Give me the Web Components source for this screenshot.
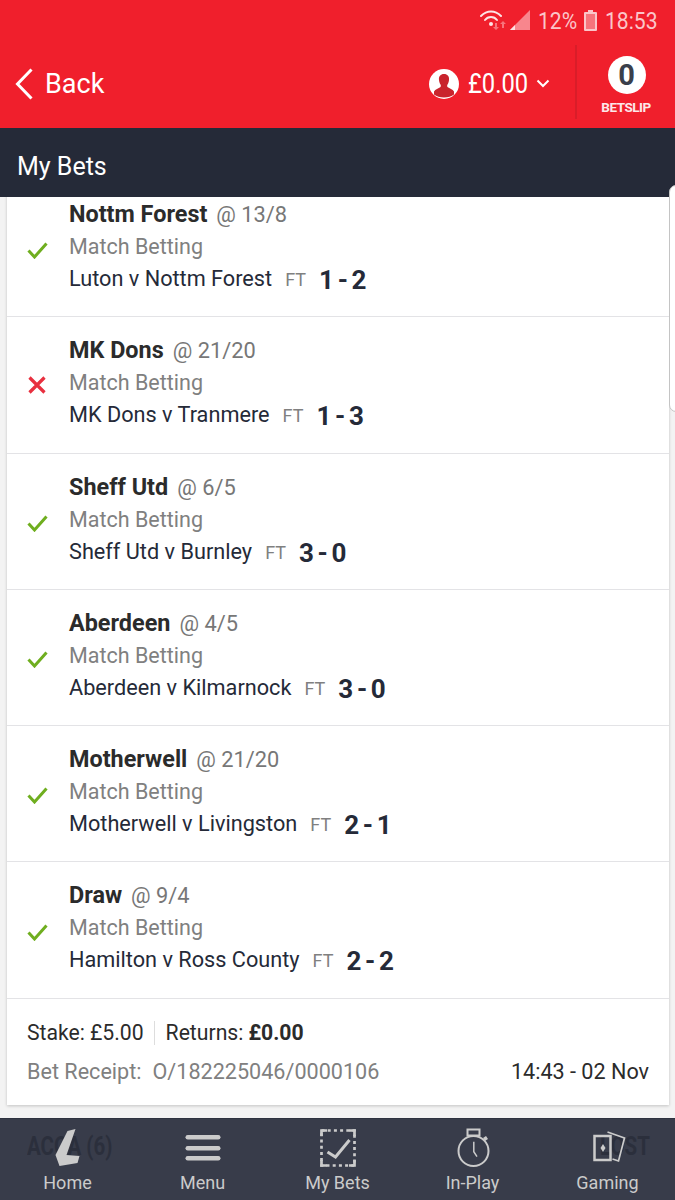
<!DOCTYPE html>
<html>
<head>
<meta charset="utf-8">
<title>My Bets</title>
<style>
  html,body{ margin:0; padding:0; width:675px; height:1200px; overflow:hidden; background:#f3f3f3; font-family:Roboto,sans-serif; }
</style>
</head>
<body>
<bet-app>
  <app-header slot="top"></app-header>
  <bet-row name="Nottm Forest" price="13/8" match="Luton v Nottm Forest" score="1 - 2" result="won"></bet-row>
  <bet-row name="MK Dons" price="21/20" match="MK Dons v Tranmere" score="1 - 3" result="lost"></bet-row>
  <bet-row name="Sheff Utd" price="6/5" match="Sheff Utd v Burnley" score="3 - 0" result="won"></bet-row>
  <bet-row name="Aberdeen" price="4/5" match="Aberdeen v Kilmarnock" score="3 - 0" result="won"></bet-row>
  <bet-row name="Motherwell" price="21/20" match="Motherwell v Livingston" score="2 - 1" result="won"></bet-row>
  <bet-row name="Draw" price="9/4" match="Hamilton v Ross County" score="2 - 2" result="won"></bet-row>
  <bet-receipt></bet-receipt>
  <bottom-nav slot="bottom"></bottom-nav>
</bet-app>
<script>
class BetApp extends HTMLElement{
  constructor(){
    super();
    this.attachShadow({mode:'open'});
    this.shadowRoot.innerHTML = `
      <style>
        :host{ display:flex; flex-direction:column; height:1200px; position:relative; overflow:hidden }
        .scroll{ flex:1; min-height:0; overflow:hidden }
        .card{ margin:-16px 6px 0 7px; background:#fff; box-shadow:0 1px 3px rgba(0,0,0,.2) }
        /* side panel handle sits over the title bar too */
        .handle{ position:absolute; right:-8px; top:185px; width:14px; height:227px; box-sizing:border-box; background:#fff; border:1px solid #c4c4c4; border-radius:7px }
      </style>
      <slot name="top"></slot>
      <div class="scroll">
        <div class="card"><slot></slot></div>
      </div>
      <div class="handle"></div>
      <slot name="bottom"></slot>`;
  }
}
customElements.define('bet-app', BetApp);

class AppHeader extends HTMLElement{
  constructor(){
    super();
    this.attachShadow({mode:'open'});
    this.shadowRoot.innerHTML = `
      <style>
        :host{ display:block; color:#fff }
        .red{ background:#f01f2c; height:128px; display:flex; flex-direction:column }
        .status{ height:40px; display:flex; justify-content:flex-end; align-items:center; padding:1px 18px 0 0; color:#fbc5c9; font-size:24px; box-sizing:border-box }
        .nar{ display:inline-block; transform:scaleX(.88); transform-origin:left center; white-space:nowrap }
        .pct{ width:39px; margin:0 7px 0 8px }
        .clock{ width:52px; margin-left:8px }
        .main{ flex:1; display:flex; align-items:center; padding-left:15px }
        .back{ display:flex; align-items:center; gap:12px; font-size:27px; margin-bottom:1px }
        .spacer{ flex:1 }
        .balance{ display:flex; align-items:center; font-size:27px; margin-bottom:1px }
        .amt{ width:60px; margin:0 8px 0 9px; transform:scaleX(.88) }
        .sep{ width:2px; height:74px; background:#d91d29; margin:0 0 5px 25px }
        .slip{ width:98px; display:flex; flex-direction:column; align-items:center; padding-top:2px; box-sizing:border-box }
        .badge{ width:38px; height:38px; margin-left:1px; border-radius:50%; background:#fff; color:#3a3f4b; font-weight:700; font-size:29px; display:flex; align-items:center; justify-content:center }
        .slip span{ font-size:13.500px; font-weight:700; margin-top:5px; letter-spacing:-.5px; color:#fde8e9 }
        .title{ background:#252a38; height:69px; display:flex; align-items:center; padding:7px 0 0 17px; box-sizing:border-box; font-size:25px }
        svg{ display:block }
      </style>
      <div class="red">
        <div class="status">
          <svg width="50" height="21" viewBox="0 0 50 21">
            <g fill="none" stroke="#fde4e6" stroke-width="2" stroke-linecap="round">
              <path d="M1 6 C7 0 15 0 21 6"/><path d="M5 10 C8 6 14 6 17 10"/>
            </g>
            <circle cx="11" cy="14" r="2" fill="#fde4e6"/>
            <path d="M16 20 l3 -3 h-2 v-4 h-2 v4 h-2z M23 11 l3 3 h-2 v4 h-2 v-4 h-2z" fill="#f7737b"/>
            <path d="M30 20 L50 0 V20Z" fill="#f8868d"/><path d="M30 20 L35 15 V20Z" fill="#fde0e2"/>
          </svg>
          <span class="nar pct">12%</span>
          <svg width="13" height="21" viewBox="0 0 13 21"><path d="M4 0h5v2h3a1 1 0 0 1 1 1v17a1 1 0 0 1-1 1h-11a1 1 0 0 1-1-1v-17a1 1 0 0 1 1-1h3z" fill="#fbc5c9"/><rect x="2" y="4" width="9" height="15" fill="#f6747c"/></svg>
          <span class="nar clock">18:53</span>
        </div>
        <div class="main">
          <div class="back">
            <svg width="18" height="32" viewBox="0 0 18 32"><path d="M16.500 1.500 L2.500 16 L16.500 30.500" fill="none" stroke="#fff" stroke-width="3"/></svg>
            <span>Back</span>
          </div>
          <div class="spacer"></div>
          <div class="balance">
            <svg width="30" height="30" viewBox="0 0 30 30"><circle cx="15" cy="15" r="15" fill="#fff"/><path d="M15 5c-3.500 0-5.500 2.500-5 6 .2 1.500.5 3 1.500 4.500.5 1 .5 2-.3 2.800-1.500 1.300-5 1.700-6.200 4.200v3C7.500 27.500 11 28.500 15 28.500s7.500-1 10-3v-3c-1.200-2.500-4.700-2.900-6.200-4.200-.8-.8-.8-1.800-.3-2.800 1-1.500 1.300-3 1.500-4.500.5-3.500-1.500-6-5-6z" fill="#c9242d"/></svg>
            <span class="nar amt">£0.00</span>
            <svg width="14" height="9" viewBox="0 0 14 9"><path d="M1.500 1.500 L7 7 L12.500 1.500" fill="none" stroke="#fff" stroke-width="2"/></svg>
          </div>
          <div class="sep"></div>
          <div class="slip">
            <div class="badge">0</div>
            <span>BETSLIP</span>
          </div>
        </div>
      </div>
      <div class="title">My Bets</div>`;
  }
}
customElements.define('app-header', AppHeader);

class BetRow extends HTMLElement{
  connectedCallback(){
    if(this.shadowRoot) return;
    this.attachShadow({mode:'open'});
    const a = n => this.getAttribute(n) || '';
    const icon = a('result') === 'lost'
      ? `<svg width="18" height="18" viewBox="0 0 18 18"><path d="M1.500 1.500 L16.500 16.500 M16.500 1.500 L1.500 16.500" stroke="#e8303f" stroke-width="3.200" fill="none"/></svg>`
      : `<svg style="margin-top:4px" width="21" height="17" viewBox="0 0 21 17"><path d="M1.500 8.500 L7.500 15 L19.500 1.500" stroke="#6fae1f" stroke-width="3" fill="none"/></svg>`;
    this.shadowRoot.innerHTML = `
      <style>
        :host{ display:flex; height:136.3px; box-sizing:border-box; border-bottom:1.500px solid #e3e3e6; align-items:stretch }
        .ico{ width:60px; margin-right:2px; display:flex; align-items:center; justify-content:center }
        .txt{ flex:1; padding-top:19px }
        .l{ display:flex; align-items:baseline; white-space:nowrap }
        .l1{ height:34px; font-size:23.400px; font-weight:700; color:#2b2b2b }
        .l1 i{ font-style:normal; font-weight:400; font-size:21.800px; color:#777; margin-left:9px }
        .l2{ height:28px; font-size:21.500px; color:#808080 }
        .l3{ font-size:21.700px; color:#252a38 }
        .ft{ font-size:18px; color:#808080; margin-left:13px }
        .sc{ font-size:26px; font-weight:700; margin-left:13px; color:#252a38; word-spacing:-2.800px; transform:translateY(3px) }
      </style>
      <div class="ico">${icon}</div>
      <div class="txt">
        <div class="l l1">${a('name')}<i>@ ${a('price')}</i></div>
        <div class="l l2">Match Betting</div>
        <div class="l l3">${a('match')}<span class="ft">FT</span><span class="sc">${a('score')}</span></div>
      </div>`;
  }
}
customElements.define('bet-row', BetRow);

class BetReceipt extends HTMLElement{
  constructor(){
    super();
    this.attachShadow({mode:'open'});
    this.shadowRoot.innerHTML = `
      <style>
        :host{ display:block; height:106px; padding:20px 20px 0; box-sizing:border-box; font-size:21.200px; color:#2b2b2b }
        .a{ display:flex; align-items:center; height:28px }
        .a b{ margin-left:5px }
        .v{ margin-left:5px }
        .div{ width:1px; height:24px; background:#ddd; margin:0 11px 0 10px }
        .c{ display:flex; justify-content:space-between; margin-top:12px; color:#808080; font-size:21.600px }
        .c .t{ color:#2b2b2b }
        .gap{ margin-left:11px }
      </style>
      <div class="a"><span>Stake:</span><span class="v">£5.00</span><span class="div"></span><span>Returns:</span><b>£0.00</b></div>
      <div class="c"><span>Bet Receipt:<span class="gap">O/182225046/0000106</span></span><span class="t">14:43 - 02 Nov</span></div>`;
  }
}
customElements.define('bet-receipt', BetReceipt);

class BottomNav extends HTMLElement{
  constructor(){
    super();
    this.attachShadow({mode:'open'});
    const c = '#cbcbcb';
    const items = [
      ['Home', `<path d="M27.500 1 L19.500 3 L7.500 27 L11.500 38 L29.500 35 L31.500 28 L18.500 27 Z" fill="${c}"/>`],
      ['Menu', `<g fill="${c}"><rect x="2.500" y="7" width="35" height="4.500" rx="2.200"/><rect x="2.500" y="18" width="35" height="4.500" rx="2.200"/><rect x="2.500" y="28" width="35" height="4.500" rx="2.200"/></g>`],
      ['My Bets', `<rect x="3.500" y="2.500" width="33" height="35" fill="none" stroke="${c}" stroke-width="2.700" stroke-dasharray="3 3.200"/><path d="M3.500 8 V2.500 H9 M31 2.500 H36.500 V8 M36.500 32 V37.500 H31 M9 37.500 H3.500 V32" fill="none" stroke="${c}" stroke-width="2.700"/><path d="M9.500 24 L17.500 29 L31.500 12" fill="none" stroke="${c}" stroke-width="3"/>`],
      ['In-Play', `<g fill="none" stroke="${c}" stroke-width="2"><circle cx="20.500" cy="23" r="15"/><rect x="14.500" y="1.500" width="12" height="6"/><path d="M20.800 13.700 V23.700 L24 28.700" stroke-width="1.500"/></g><path d="M30 10 l3 -2 2 3 -3 2z" fill="${c}"/>`],
      ['Gaming', `<g fill="none" stroke="${c}"><rect x="6.500" y="8" width="16" height="24" stroke-width="2.500"/><path d="M19.500 4 L36.500 10 L30.500 33 L24.500 31" stroke-width="1.700"/></g><path d="M15 16 l2.500 4 -2.500 4 -2.500 -4z" fill="${c}"/>`]
    ];
    this.shadowRoot.innerHTML = `
      <style>
        :host{ display:block; position:relative; height:82px; background:#383c4a; border-top:1px solid #2e3240; box-sizing:border-box; color:${c} }
        .ghost{ position:absolute; top:13px; font-size:25px; font-weight:700; color:#2b2f3c; white-space:nowrap; transform:scaleX(.82); transform-origin:left center }
        .row{ position:relative; display:flex; height:100% }
        .it{ flex:1; display:flex; flex-direction:column; align-items:center; padding-top:9px; font-size:18px }
        svg{ display:block; margin-bottom:4px }
      </style>
      <span class="ghost" style="left:27px">ACCA (6)</span>
      <span class="ghost" style="left:600px">LOST</span>
      <div class="row">${items.map(([l,s]) => `<div class="it"><svg width="40" height="40" viewBox="0 0 40 40">${s}</svg><span>${l}</span></div>`).join('')}</div>`;
  }
}
customElements.define('bottom-nav', BottomNav);
</script>
</body>
</html>
